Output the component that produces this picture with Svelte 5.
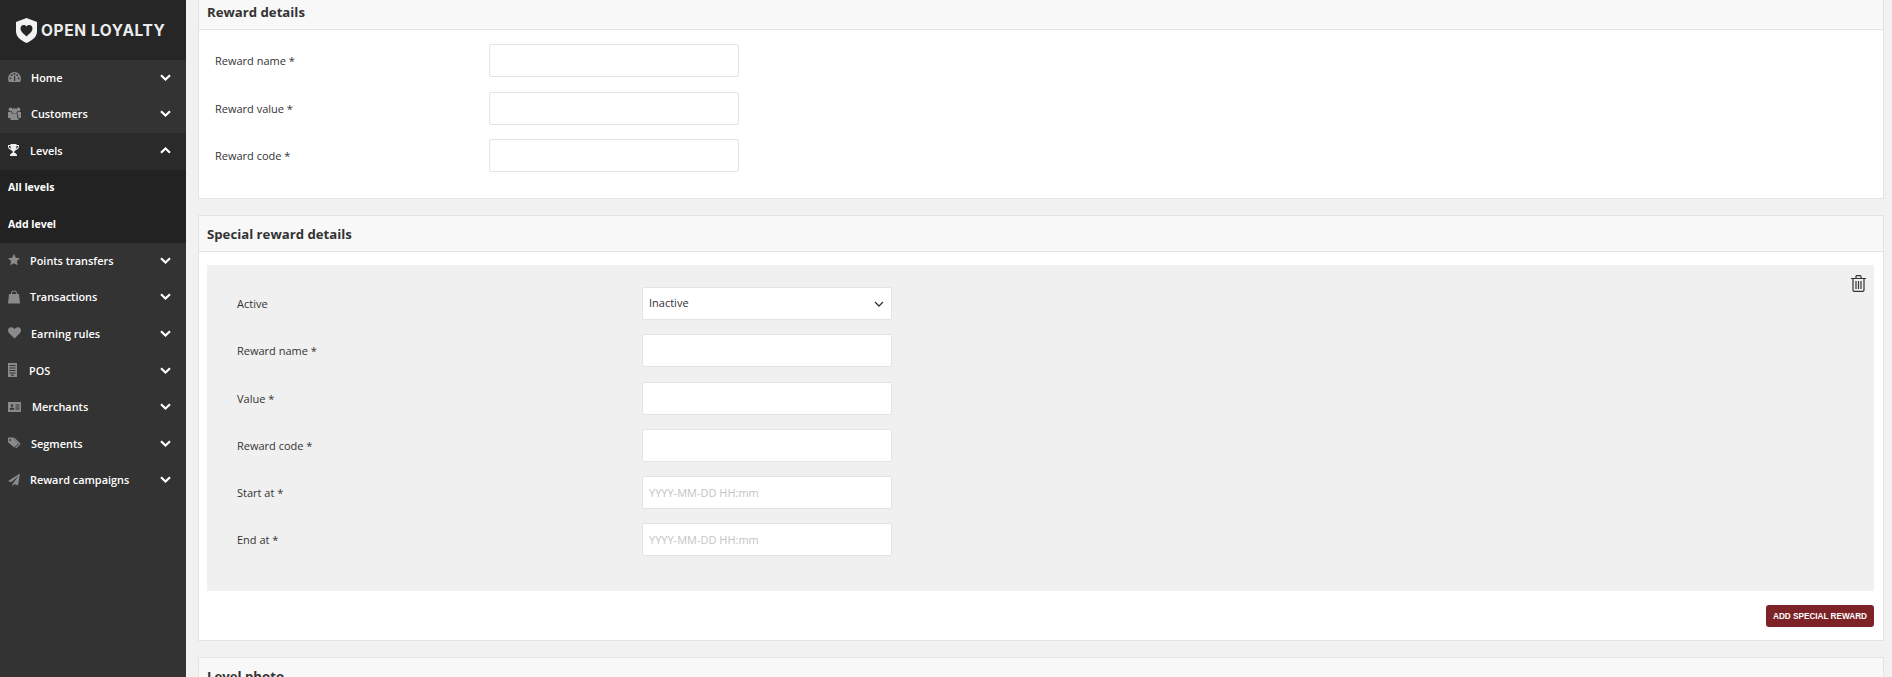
<script lang="ts">
	const menu = [
		{ name: 'Home', icon: 'gauge', w: 13, gap: 10 },
		{ name: 'Customers', icon: 'users', w: 13, gap: 10 },
		{ name: 'Levels', icon: 'trophy', w: 11, gap: 11, open: true },
		{ name: 'Points transfers', icon: 'star', w: 12, gap: 10 },
		{ name: 'Transactions', icon: 'bag', w: 12, gap: 10 },
		{ name: 'Earning rules', icon: 'heart', w: 13, gap: 10 },
		{ name: 'POS', icon: 'pos', w: 9, gap: 12 },
		{ name: 'Merchants', icon: 'card', w: 13, gap: 11 },
		{ name: 'Segments', icon: 'tags', w: 13, gap: 10 },
		{ name: 'Reward campaigns', icon: 'plane', w: 12, gap: 10 }
	];
	const subItems = ['All levels', 'Add level'];
	const rewardFields = ['Reward name', 'Reward value', 'Reward code'];
	const specialFields = [
		{ label: 'Reward name' },
		{ label: 'Value' },
		{ label: 'Reward code' },
		{ label: 'Start at', placeholder: 'YYYY-MM-DD HH:mm' },
		{ label: 'End at', placeholder: 'YYYY-MM-DD HH:mm' }
	];
</script>

{#snippet icon(name, w)}
	<svg class="ico" class:lit={name === 'trophy'} width={w} height="14" viewBox="0 0 {w} 14" aria-hidden="true">
		{#if name === 'gauge'}
			<path d="M6.5 2a6.5 6.5 0 0 0-6.5 6.5c0 1.3.4 2.6 1 3.5h11c.6-.9 1-2.2 1-3.5A6.5 6.5 0 0 0 6.5 2z" />
			<g fill="#333"><circle cx="2.4" cy="8.4" r=".9" /><circle cx="3.8" cy="5.2" r=".9" /><circle cx="6.5" cy="4" r=".9" /><circle cx="9.2" cy="5.2" r=".9" /><circle cx="10.6" cy="8.4" r=".9" /><rect x="6" y="6" width="1.2" height="5" /></g>
		{:else if name === 'users'}
			<circle cx="2.6" cy="2.600" r="2" /><circle cx="10.4" cy="2.600" r="2" /><circle cx="6.5" cy="3.800" r="2.600" />
			<path d="M0 5h3.400l.4 3v3H0zM13 5H9.600l-.4 3v3H13zM3.200 6.500h6.600L10.600 13H2.400z" />
		{:else if name === 'trophy'}
			<path d="M2.5 1h6v1H11v1.6C11 5.4 9.6 6.6 8 6.9 7.4 7.6 6.7 8 6.4 8.2V10h1.4v1.2H9V13H2v-1.8h1.2V10h1.4V8.2C4.3 8 3.6 7.6 3 6.9 1.400 6.600 0 5.400 0 3.600V2h2.500zM1 3v.6c0 1 .7 1.900 1.800 2.200-.2-.800-.3-1.800-.3-2.800zM10 3H8.500c0 1-.1 2-.3 2.800C9.300 5.500 10 4.600 10 3.600z" fill-rule="evenodd" />
		{:else if name === 'star'}
			<path d="M6 .8l1.800 3.900 4.200.5-3.100 2.900.8 4.200L6 10.200l-3.700 2.100.8-4.200L0 5.200l4.200-.5z" />
		{:else if name === 'bag'}
			<path d="M3 4V3.200C3 1.600 4.300.5 6 .5s3 1.100 3 2.700V4h2l1 9.500H0L1 4zm1 0h4v-.8C8 2.200 7.100 1.500 6 1.500s-2 .7-2 1.700z" fill-rule="evenodd" />
		{:else if name === 'heart'}
			<path d="M6.500 12.500L1.200 7.200C-.4 5.600-.3 3.300 1 2.100c1.400-1.200 3.700-1 5.500 1 1.800-2 4.100-2.200 5.500-1 1.300 1.200 1.400 3.500-.2 5.100z" />
		{:else if name === 'pos'}
			<path d="M0 0h9v14H0zM1.500 2v1h6V2zm0 2.500v1h6v-1zm0 2.500v1h6V7zm0 2.500v1h6v-1zM3.500 11.500v1.500h2v-1.500z" fill-rule="evenodd" />
		{:else if name === 'card'}
			<path d="M0 2h13v10H0zM4 4.200a1.300 1.300 0 1 0 0 2.600 1.300 1.300 0 0 0 0-2.600zM1.600 9.800h4.800C6.400 8.300 5.400 7.500 4 7.500S1.600 8.300 1.600 9.800zM7.500 4.500v1h4v-1zm0 2v1h4v-1zm0 2v1h4v-1z" fill-rule="evenodd" />
		{:else if name === 'tags'}
			<path d="M0 1.500h4.800l5.700 5.700-4.300 4.400L0 6.200zM2.200 3.100a.9.900 0 1 0 0 1.800.9.900 0 0 0 0-1.800z" fill-rule="evenodd" />
			<path d="M6.200 1.500l5.900 5.700a1 1 0 0 1 0 1.400l-4 4-.9-.9 3.700-3.800-5.700-6.400z" />
		{:else if name === 'plane'}
			<path d="M12 .5L10 12.500 6.400 11 4.600 13.500V10.700L10.500 3 3.200 9.300 0 8z" />
		{/if}
	</svg>
{/snippet}

<div class="layout">
	<aside class="sidebar">
		<div class="brand">
			<svg width="21" height="25" viewBox="0 0 21 25" aria-hidden="true">
				<path d="M10.500 0L21 4v9.500c0 5-4.500 9-10.500 11.500C4.500 22.500 0 18.500 0 13.500V4z" fill="#f2f2f2" />
				<path d="M10.500 8.500C12 6 16.500 6.500 16.500 10.500c0 3-3.500 5.500-6 8-2.500-2.500-6-5-6-8 0-4 4.500-4.500 6-2z" fill="#262626" />
			</svg>
			<span>OPEN LOYALTY</span>
		</div>
		<nav>
			{#each menu as item}
				<a class="item" class:open={item.open} href="#top">
					{@render icon(item.icon, item.w)}
					<span class="label" style="margin-left: {item.gap}px">{item.name}</span>
					<svg class="chev" width="11" height="7" viewBox="0 0 11 7" aria-hidden="true">
						<polyline points={item.open ? '1,5.800 5.500,1.500 10,5.800' : '1,1.200 5.500,5.500 10,1.200'} />
					</svg>
				</a>
				{#if item.open}
					{#each subItems as sub}
						<a class="sub" href="#top">{sub}</a>
					{/each}
				{/if}
			{/each}
		</nav>
	</aside>

	<main class="content">
		<section class="card">
			<header class="card-head"><h3>Reward details</h3></header>
			<div class="card-body reward">
				{#each rewardFields as field}
					<div class="row reward-row">
						<label for={field}>{field} *</label>
						<input id={field} type="text" />
					</div>
				{/each}
			</div>
		</section>

		<section class="card">
			<header class="card-head"><h3>Special reward details</h3></header>
			<div class="card-body special">
				<div class="panel">
					<button class="trash" type="button" aria-label="Remove">
						<svg width="15" height="17" viewBox="0 0 15 17" fill="none" stroke="#333" stroke-width="1.200">
							<path d="M0 3.500h15M5 3.500V1.500c0-.5.300-.9.800-.9h3.400c.5 0 .8.400.8.900v2M2 3.500v11.500c0 .8.500 1.400 1.200 1.400h8.600c.7 0 1.200-.6 1.200-1.400V3.500M5 6v8M7.500 6v8M10 6v8" />
						</svg>
					</button>
					<div class="row panel-row">
						<label for="active">Active</label>
						<div class="select-wrap">
							<select id="active">
								<option>Inactive</option>
								<option>Active</option>
							</select>
							<svg width="10" height="6" viewBox="0 0 10 6" fill="none" stroke="#333" stroke-width="1.300" aria-hidden="true">
								<polyline points="1,1 5,5 9,1" />
							</svg>
						</div>
					</div>
					{#each specialFields as field}
						<div class="row panel-row">
							<label for="s-{field.label}">{field.label} *</label>
							<input id="s-{field.label}" type="text" placeholder={field.placeholder} />
						</div>
					{/each}
				</div>
				<div class="actions">
					<button class="add" type="button">ADD SPECIAL REWARD</button>
				</div>
			</div>
		</section>

		<section class="card">
			<header class="card-head"><h3>Level photo</h3></header>
		</section>
	</main>
</div>

<style>
	:global(body) {
		margin: 0;
		background: #f1f1f1;
	}
	.layout {
		display: flex;
		height: 677px;
		overflow: hidden;
		font-family: 'Open Sans', sans-serif;
		font-size: 11px;
		color: #333;
	}
	.sidebar {
		flex: 0 0 186px;
		background: #333;
	}
	.brand {
		height: 60px;
		background: #262626;
		display: flex;
		align-items: center;
		padding-left: 16px;
		gap: 4px;
		box-sizing: border-box;
	}
	.brand span {
		font-family: Inter, sans-serif;
		font-weight: 700;
		font-size: 15.500px;
		letter-spacing: 0.600px;
		color: #ececec;
		white-space: nowrap;
	}
	.item {
		display: flex;
		align-items: center;
		height: 36.600px;
		padding: 0 15px 2px 8px;
		text-decoration: none;
		color: #fff;
		font-size: 10.900px;
		font-weight: 600;
		box-sizing: border-box;
	}
	.item.open {
		background: #2a2a2a;
	}
	.label {
		flex: 1;
		white-space: nowrap;
	}
	.ico {
		fill: #8a8a8a;
		flex: none;
	}
	.ico.lit {
		fill: #eee;
	}
	.chev {
		fill: none;
		stroke: #fff;
		stroke-width: 2.200;
		flex: none;
	}
	.sub {
		display: flex;
		align-items: center;
		height: 36.600px;
		padding: 0 0 2px 8px;
		box-sizing: border-box;
		background: #222;
		color: #fff;
		font-size: 10.500px;
		font-weight: 700;
		text-decoration: none;
	}
	.content {
		flex: 1;
		min-width: 0;
		margin-top: -7px;
		padding: 0 8px 0 12px;
	}
	.card {
		background: #fff;
		border: 1px solid #e4e4e4;
		margin-bottom: 16px;
	}
	.card-head {
		height: 35px;
		background: #f8f8f8;
		border-bottom: 1px solid #e4e4e4;
		display: flex;
		align-items: center;
		padding-left: 8px;
	}
	h3 {
		margin: 0;
		font-size: 13.200px;
		font-weight: 700;
		color: #333;
	}
	.row {
		display: grid;
		align-items: center;
	}
	label {
		font-size: 11px;
		color: #333;
	}
	input,
	select {
		height: 33px;
		width: 250px;
		box-sizing: border-box;
		background: #fff;
		border: 1px solid #e4e4e4;
		border-radius: 2px;
		font-family: 'Open Sans', sans-serif;
		font-size: 11px;
		color: #333;
		padding: 0 6px;
		outline: none;
	}
	input::placeholder {
		color: #c4c4c4;
		opacity: 1;
	}
	.reward {
		padding: 14px 16px 26px;
		display: flex;
		flex-direction: column;
		gap: 14.500px;
	}
	.reward-row {
		grid-template-columns: 274px 250px;
	}
	.special {
		padding: 13px 9px 13px 8px;
	}
	.panel {
		position: relative;
		background: #f0f0f0;
		height: 326px;
		padding: 22px 30px 0;
		box-sizing: border-box;
		display: flex;
		flex-direction: column;
		gap: 14.300px;
	}
	.panel-row {
		grid-template-columns: 405px 250px;
	}
	.trash {
		position: absolute;
		top: 10px;
		right: 8px;
		padding: 0;
		border: 0;
		background: none;
		line-height: 0;
	}
	.select-wrap {
		position: relative;
		width: 250px;
		line-height: 0;
	}
	.select-wrap select {
		appearance: none;
		-webkit-appearance: none;
		line-height: normal;
		padding-bottom: 3px;
	}
	.select-wrap svg {
		position: absolute;
		right: 8px;
		top: 14px;
	}
	.actions {
		display: flex;
		justify-content: flex-end;
		margin-top: 14px;
	}
	.add {
		height: 22px;
		width: 108px;
		padding: 0;
		background: #7d2227;
		border: 0;
		border-radius: 3px;
		color: #fff;
		font-family: 'Liberation Sans', Arial, sans-serif;
		font-size: 8.200px;
		font-weight: 700;
		white-space: nowrap;
	}
</style>
